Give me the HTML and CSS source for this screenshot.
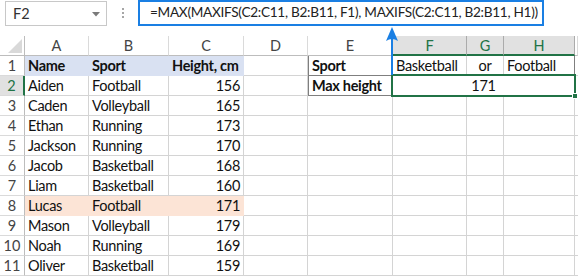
FILE: index.html
```html
<!DOCTYPE html>
<html>
<head>
<meta charset="utf-8">
<link rel="stylesheet" href="styles.css">
</head>
<body>
<div class="app">
  <div class="toolbar">
    <div class="namebox">
      <span class="namebox-text">F2</span>
      <svg class="caret" width="8" height="5" viewBox="0 0 8 5"><path d="M0 0H8L4 4.5Z" fill="#7a7a7a"/></svg>
    </div>
    <div class="dots"><i></i><i></i><i></i></div>
    <div class="formula">=MAX(MAXIFS(C2:C11, B2:B11, F1), MAXIFS(C2:C11, B2:B11, H1))</div>
  </div>
  <div class="sheet">
    <div class="hd corner"><svg width="14" height="14" viewBox="0 0 14 14"><path d="M14 0V14H0Z" fill="#d9d9d9"/></svg></div>
    <div class="hd col">A</div>
    <div class="hd col">B</div>
    <div class="hd col">C</div>
    <div class="hd col">D</div>
    <div class="hd col">E</div>
    <div class="hd col sel">F</div>
    <div class="hd col sel">G</div>
    <div class="hd col sel">H</div>
    <div class="hd col"></div>

    <div class="hd row">1</div>
    <div class="c blue b">Name</div><div class="c blue b">Sport</div><div class="c blue b">Height, cm</div>
    <div class="c"></div><div class="c b tl tb">Sport</div><div class="c tb">Basketball</div><div class="c ctr tb">or</div><div class="c tb tr">Football</div><div class="c"></div>

    <div class="hd row sel">2</div>
    <div class="c">Aiden</div><div class="c">Football</div><div class="c r">156</div>
    <div class="c"></div><div class="c b tl tb">Max height</div><div class="c merged tb tr">171</div><div class="c"></div>

    <div class="hd row">3</div>
    <div class="c">Caden</div><div class="c">Volleyball</div><div class="c r">165</div>
    <div class="c"></div><div class="c"></div><div class="c"></div><div class="c"></div><div class="c"></div><div class="c"></div>

    <div class="hd row">4</div>
    <div class="c">Ethan</div><div class="c">Running</div><div class="c r">173</div>
    <div class="c"></div><div class="c"></div><div class="c"></div><div class="c"></div><div class="c"></div><div class="c"></div>

    <div class="hd row">5</div>
    <div class="c">Jackson</div><div class="c">Running</div><div class="c r">170</div>
    <div class="c"></div><div class="c"></div><div class="c"></div><div class="c"></div><div class="c"></div><div class="c"></div>

    <div class="hd row">6</div>
    <div class="c">Jacob</div><div class="c">Basketball</div><div class="c r">168</div>
    <div class="c"></div><div class="c"></div><div class="c"></div><div class="c"></div><div class="c"></div><div class="c"></div>

    <div class="hd row">7</div>
    <div class="c">Liam</div><div class="c">Basketball</div><div class="c r">160</div>
    <div class="c"></div><div class="c"></div><div class="c"></div><div class="c"></div><div class="c"></div><div class="c"></div>

    <div class="hd row">8</div>
    <div class="c peach">Lucas</div><div class="c peach">Football</div><div class="c r peach">171</div>
    <div class="c"></div><div class="c"></div><div class="c"></div><div class="c"></div><div class="c"></div><div class="c"></div>

    <div class="hd row">9</div>
    <div class="c">Mason</div><div class="c">Volleyball</div><div class="c r">179</div>
    <div class="c"></div><div class="c"></div><div class="c"></div><div class="c"></div><div class="c"></div><div class="c"></div>

    <div class="hd row">10</div>
    <div class="c">Noah</div><div class="c">Running</div><div class="c r">169</div>
    <div class="c"></div><div class="c"></div><div class="c"></div><div class="c"></div><div class="c"></div><div class="c"></div>

    <div class="hd row">11</div>
    <div class="c">Oliver</div><div class="c">Basketball</div><div class="c r">159</div>
    <div class="c"></div><div class="c"></div><div class="c"></div><div class="c"></div><div class="c"></div><div class="c"></div>
  </div>

  <div class="selection"><span class="handle"></span></div>
  <svg class="arrow" width="16" height="52" viewBox="0 0 16 52">
    <path d="M8 2 L14 16 Q8 12 2 16 Z" fill="#1a7fe3"/>
    <rect x="7" y="10" width="2" height="40" fill="#1a7fe3"/>
  </svg>
</div>
</body>
</html>
```
FILE: styles.css
```css
* { box-sizing: border-box; }
body { margin: 0; background: #fff; }
.app {
  position: relative;
  width: 578px;
  height: 276px;
  overflow: hidden;
  font-family: Lato, "Open Sans", sans-serif;
  font-size: 14.5px;
  color: #111;
}
.toolbar {
  display: flex;
  align-items: flex-start;
  height: 36px;
}
.namebox {
  margin: 1px 0 0 5px;
  width: 102px;
  height: 25px;
  border: 1px solid #c8c8c8;
  display: flex;
  align-items: center;
  justify-content: space-between;
  padding: 0 6px 0 7px;
  color: #333;
  font-size: 14.5px;
}
.caret { margin-top: 1px; }
.dots {
  margin: 8px 0 0 15px;
  width: 2px;
  display: flex;
  flex-direction: column;
  gap: 2px;
}
.dots i { display: block; width: 2px; height: 2px; background: #a6a6a6; }
.formula {
  margin-left: 14px;
  width: 406px;
  height: 26px;
  border: 2px solid #1a7fe3;
  padding: 0 0 0 10px;
  line-height: 21px;
  font-size: 13.6px;
  letter-spacing: -0.28px;
  color: #222;
  white-space: nowrap;
  overflow: hidden;
}
.sheet {
  display: grid;
  grid-template-columns: 25px 64px 80px 75px 64px 85px 74px 37px 71px 3px;
  grid-auto-rows: 20px;
}
.hd {
  display: flex;
  align-items: center;
  justify-content: center;
  color: #444;
  font-size: 14.5px;
  background: #fff;
  border-right: 1px solid #dadada;
  border-bottom: 1px solid #bdbdbd;
}
.hd.row { border-right-color: #bdbdbd; border-bottom-color: #dadada; }
.corner { justify-content: flex-end; align-items: flex-end; padding: 0 2px 2px 0; border-right-color: #bdbdbd; }
.hd.col.sel {
  background: #e1e1e1;
  color: #217346;
  border-bottom: 2px solid #217346;
  border-right-color: #ababab;
}
.hd.row.sel {
  background: #e1e1e1;
  color: #217346;
  border-right: 2px solid #217346;
}
.c {
  display: flex;
  align-items: flex-end;
  padding: 0 3px 1px 3px;
  white-space: nowrap;
  letter-spacing: -0.3px;
  border-right: 1px solid #d4d4d4;
  border-bottom: 1px solid #d4d4d4;
}
.c.r { justify-content: flex-end; }
.c.ctr { justify-content: center; }
.c.b { font-weight: bold; }
.c.blue { background: #d9e1f2; border-right-color: #d9e1f2; border-bottom-color: #d9e1f2; }
.c.peach { background: #fce4d6; border-right-color: #fce4d6; border-bottom-color: #fce4d6; }
.c.tl { border-left: 1px solid #7f7f7f; }
.c.tb { border-bottom-color: #7f7f7f; }
.c.tr { border-right-color: #7f7f7f; }
.c.merged { grid-column: span 3; justify-content: center; }
.selection {
  position: absolute;
  left: 391px;
  top: 74px;
  width: 185px;
  height: 23px;
  border: 2px solid #217346;
}
.handle {
  position: absolute;
  right: -4px;
  bottom: -4px;
  width: 6px;
  height: 6px;
  background: #217346;
  border: 1px solid #fff;
}
.arrow {
  position: absolute;
  left: 384px;
  top: 25px;
}
```
